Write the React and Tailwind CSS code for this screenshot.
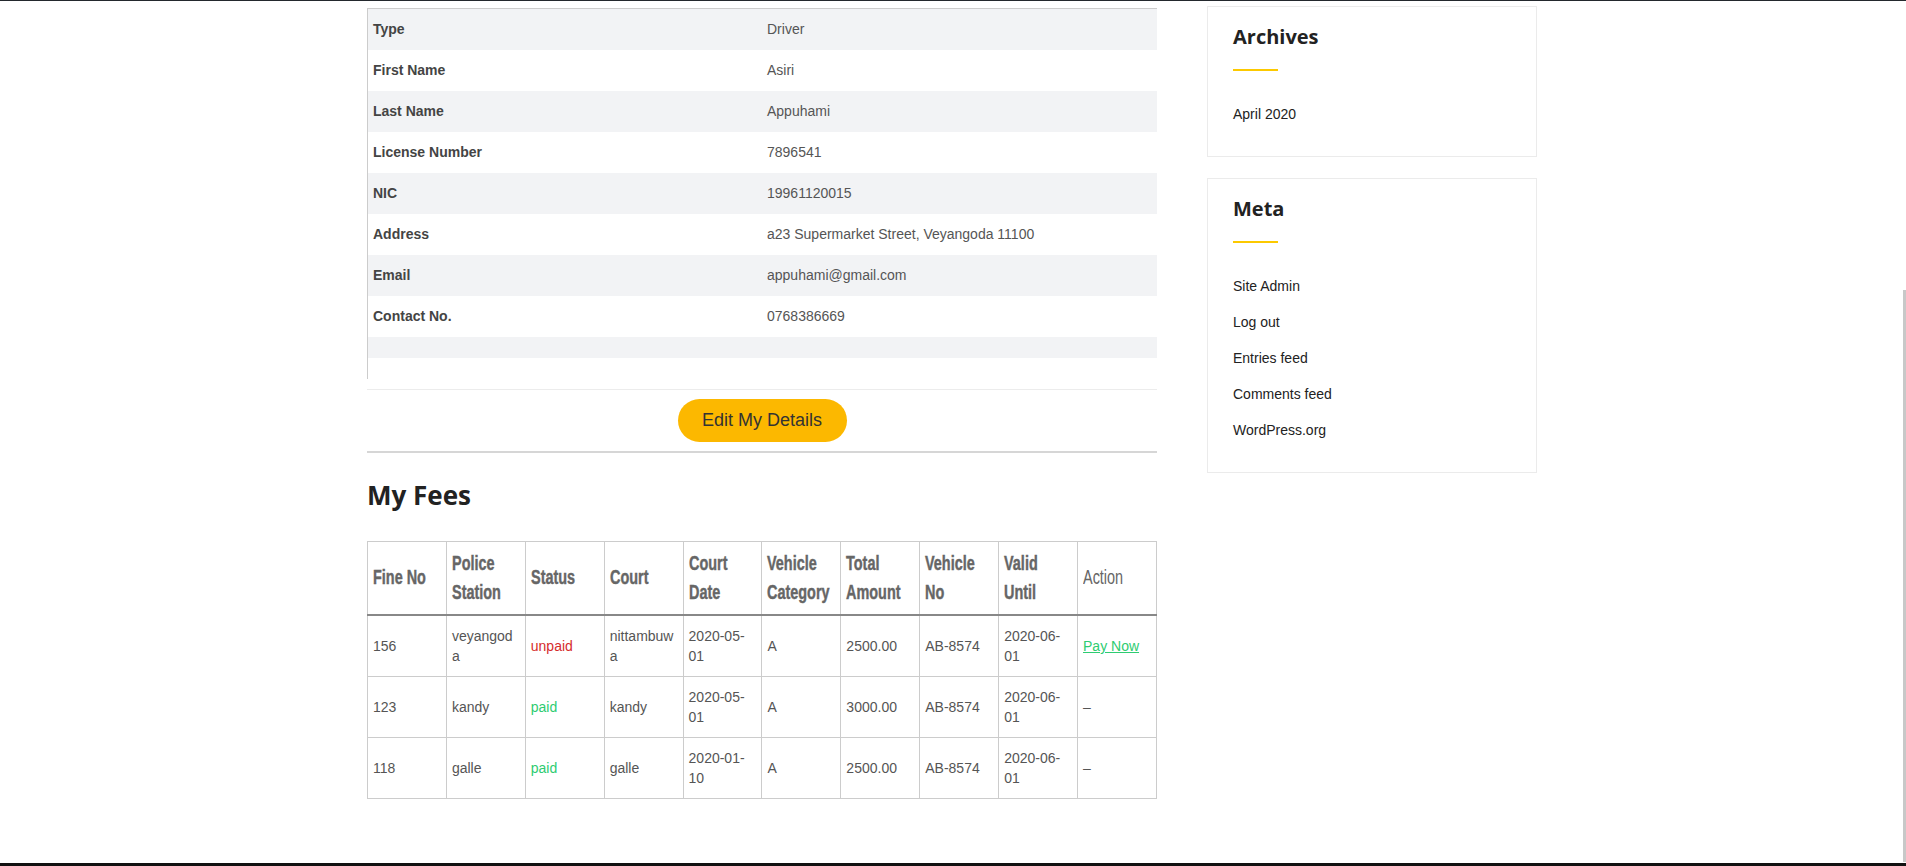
import React from "react";

const details = [
  ["Type", "Driver"],
  ["First Name", "Asiri"],
  ["Last Name", "Appuhami"],
  ["License Number", "7896541"],
  ["NIC", "19961120015"],
  ["Address", "a23 Supermarket Street, Veyangoda 11100"],
  ["Email", "appuhami@gmail.com"],
  ["Contact No.", "0768386669"],
];

const fees = [
  { no: "156", station: "veyangoda", status: "unpaid", court: "nittambuwa", date: "2020-05-01", cat: "A", amount: "2500.00", vno: "AB-8574", valid: "2020-06-01", action: "pay" },
  { no: "123", station: "kandy", status: "paid", court: "kandy", date: "2020-05-01", cat: "A", amount: "3000.00", vno: "AB-8574", valid: "2020-06-01", action: "-" },
  { no: "118", station: "galle", status: "paid", court: "galle", date: "2020-01-10", cat: "A", amount: "2500.00", vno: "AB-8574", valid: "2020-06-01", action: "-" },
];

const headers = [
  ["Fine No", true],
  ["Police Station", true],
  ["Status", true],
  ["Court", true],
  ["Court Date", true],
  ["Vehicle Category", true],
  ["Total Amount", true],
  ["Vehicle No", true],
  ["Valid Until", true],
  ["Action", false],
];

const sans = "font-['Liberation_Sans',Arial,sans-serif]";
const heading = "font-['Open_Sans','Noto_Sans',sans-serif]";

function Widget({ title, items }) {
  return (
    <div className="border border-[#ebebeb] px-[25px] pt-[16px] pb-[32px]">
      <h3 className={`${heading} text-[20px] leading-[28px] font-bold text-[#222]`}>{title}</h3>
      <div className="mt-[18px] h-[2px] w-[45px] bg-[#fcc900]" />
      <ul className={`${sans} mt-[33px] flex flex-col gap-[16px] text-[14px] leading-[20px] text-[#222]`}>
        {items.map((t) => (
          <li key={t}>{t}</li>
        ))}
      </ul>
    </div>
  );
}

export default function App() {
  return (
    <div className="relative flex h-[866px] flex-col overflow-hidden bg-white">
      <div className="h-px bg-[#23282d]" />
      <div className="ml-[367px] flex w-[1170px] items-start gap-[50px]">
        <main className="w-[790px] pt-[7px]">
          <div className={`${sans} border-t border-l border-[#ccc] text-[14px]`}>
            {details.map(([k, v], i) => (
              <div key={k} className={`flex h-[41px] items-center ${i % 2 === 0 ? "bg-[#f2f3f5]" : "bg-white"}`}>
                <div className="w-[393px] pl-[5px] font-bold text-[#444]">{k}</div>
                <div className="flex-1 pl-[6px] text-[#555]">{v}</div>
              </div>
            ))}
            <div className="h-[21px] bg-[#f2f3f5]" />
            <div className="h-[21px] bg-white" />
          </div>
          <div className="mt-[10px] flex justify-center border-t border-[#ececec] pt-[9px] pb-[9px]">
            <button className={`${sans} h-[43px] w-[169px] rounded-full bg-[#fcb800] text-[18px] text-[#333]`}>
              Edit My Details
            </button>
          </div>
          <div className="h-[2px] bg-[#d6d6d6]" />
          <h2 className={`${heading} mt-[24px] text-[26px] leading-[36px] font-bold text-[#222]`}>My Fees</h2>
          <table className={`${sans} mt-[28px] w-full table-fixed border-collapse text-[14px] text-[#555]`}>
            <thead>
              <tr>
                {headers.map(([h, bold]) => (
                  <th
                    key={h}
                    className={`border border-[#ccc] border-b-2 border-b-[#888] px-[5px] py-[10px] text-left align-middle text-[19px] leading-[26px] text-[#666] ${bold ? "font-bold [-webkit-text-stroke:0.4px_#666]" : "font-normal"}`}
                  >
                    <span className="block w-[131.6%] origin-left scale-x-[0.76] scale-y-[1.08]">{h}</span>
                  </th>
                ))}
              </tr>
            </thead>
            <tbody>
              {fees.map((f) => (
                <tr key={f.no}>
                  {[f.no, f.station, f.status, f.court, f.date, f.cat, f.amount, f.vno, f.valid, f.action].map((c, j) => (
                    <td
                      key={j}
                      className="border border-[#ccc] px-[5px] py-[10px] align-middle leading-[20px] [overflow-wrap:anywhere]"
                    >
                      {j === 2 ? (
                        <span className={c === "paid" ? "text-[#2ecc71]" : "text-[#d62c2c]"}>{c}</span>
                      ) : j === 9 ? (
                        c === "pay" ? (
                          <a href="#" className="text-[#2ecc71] underline">Pay Now</a>
                        ) : (
                          <span>–</span>
                        )
                      ) : (
                        c
                      )}
                    </td>
                  ))}
                </tr>
              ))}
            </tbody>
          </table>
        </main>
        <aside className="flex w-[330px] flex-col gap-[21px] pt-[5px]">
          <Widget title="Archives" items={["April 2020"]} />
          <Widget title="Meta" items={["Site Admin", "Log out", "Entries feed", "Comments feed", "WordPress.org"]} />
        </aside>
      </div>
      <div className="flex-1" />
      <div className="h-[3px] bg-[#111]" />
      <div className="absolute right-0 top-[290px] h-[572px] w-[3px] bg-[#c8c8c8]" />
    </div>
  );
}
